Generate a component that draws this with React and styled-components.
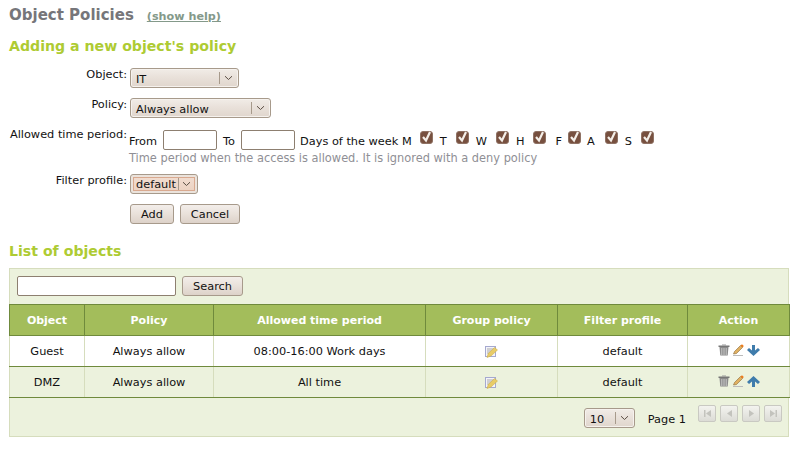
import React from "react";
import styled, { createGlobalStyle } from "styled-components";

const Global = createGlobalStyle`
  html, body { margin: 0; padding: 0; background: #fff; }
  body { font-family: "DejaVu Sans", sans-serif; font-size: 11.33px; color: #111; overflow: hidden; }
`;
const Page = styled.div`
  width: 800px; height: 453px; box-sizing: border-box; padding: 5px 11px 0 9px; overflow: hidden;
`;
const TitleRow = styled.div`display: flex; align-items: baseline; gap: 13px; height: 21px;`;
const Title = styled.h2`margin: 0; font-size: 15px; line-height: 21px; font-weight: bold; color: #76767a;`;
const Help = styled.a`font-size: 11.2px; font-weight: bold; color: #84998a; text-decoration: underline;`;
const Section = styled.h3`
  margin: ${p => p.$top}px 0 0; font-size: 14.13px; line-height: 20px; font-weight: bold; color: #aecb33;
`;
const FormRow = styled.div`
  display: flex; align-items: flex-start; margin-top: ${p => p.$top}px; min-height: ${p => p.$h || 20}px;
`;
const Label = styled.label`
  width: 118px; flex: none; text-align: right; font-size: 11.33px; line-height: 14px; margin: ${p => p.$up ? "-1px" : "0"} 3px 0 0; white-space: nowrap;
`;
const Controls = styled.div`display: flex; flex-direction: column; margin-left: -1px; padding-top: 3px;`;
const Line = styled.div`display: flex; align-items: center; height: 20px;`;
const Word = styled.span`font-size: 11.33px; line-height: 14px; margin: ${p => p.$m || "0"}; position: relative; top: 1px;`;
const Day = styled.span`font-size: 11.33px; line-height: 14px; margin-left: ${p => p.$ml}px; margin-right: ${p => p.$mr}px; position: relative; top: 1px;`;
const Hint = styled.div`font-size: 11.38px; line-height: 14px; color: #8f8f95; margin-top: 1px;`;
const SelectBox = styled.div`
  box-sizing: border-box; width: ${p => p.$w}px; height: 20px; display: flex; align-items: stretch;
  border: 1px solid #a79a8b; border-radius: 3px;
  background: linear-gradient(#f1ece7, #e9e1da 45%, #e0d6cd);
  font-size: 11.33px; box-shadow: inset 0 0 0 1px #f6f2ee;
`;
const SelectText = styled.span`flex: 1; padding-left: 5px; line-height: 20px;`;
const Caret = styled.span`
  width: ${p => p.$w}px; flex: none; display: flex; align-items: center; justify-content: center; position: relative;
  &::before { content: ""; position: absolute; left: 0; top: 3px; bottom: 3px; width: 1px; background: #a79a8b; }
`;
const FocusSelect = styled.div`
  box-sizing: border-box; width: 68px; height: 20px; padding: 2px; border: 1px solid #a79a8b; border-radius: 3px;
  background: #ebe3dc; display: flex;
`;
const FocusInner = styled.div`
  flex: 1; display: flex; border: 1px solid #d9a98f; background: linear-gradient(#f1dccf, #ecd3c3); font-size: 11.33px; line-height: 12px;
`;
const FocusText = styled.span`flex: 1; padding-left: 2px;`;
const FocusCaret = styled.span`
  width: 15px; flex: none; border-left: 1px solid #a79a8b; display: flex; align-items: center; justify-content: center;
`;
const TextInput = styled.div`
  box-sizing: border-box; width: ${p => p.$w}px; height: 20px; background: #fff; border: 1px solid #8d7f70; border-radius: 2px; flex: none;
`;
const Button = styled.div`
  box-sizing: border-box; height: 20px; width: ${p => p.$w}px; display: flex; align-items: center; justify-content: center; font-size: 11.33px;
  border: 1px solid #a79a8b; border-radius: 3px; background: linear-gradient(#f3eeea, #e9e1da 50%, #ddd2c9); flex: none;
`;
const Buttons = styled.div`display: flex; gap: 6px;`;
const Panel = styled.div`
  box-sizing: border-box; margin-top: 7px; height: 169px; border: 1px solid #d6ddbd; background: #ecf2dd;
  display: flex; flex-direction: column;
`;
const SearchBar = styled.div`display: flex; align-items: flex-start; gap: 6px; height: 35px; box-sizing: border-box; padding: 7px 0 0 7px; flex: none;`;
const Table = styled.table`
  width: 780px; border-collapse: collapse; table-layout: fixed; font-size: 11.33px; margin: 0 0 0 -1px; flex: none;
`;
const Th = styled.th`
  height: 30px; padding: 0; background: #a3bd5b; color: #fff; font-weight: bold; font-size: 11px;
  border: 1px solid #6f8a3c; text-align: center;
`;
const Td = styled.td`
  height: 30px; padding: 0; text-align: center; background: ${p => p.$alt ? "#ecf2dd" : "#fff"};
  border-bottom: 1px solid #6f8a3c; border-right: 1px solid #d6ddbd;
  &:first-child { border-left: 1px solid #d6ddbd; }
`;
const IconCell = styled.div`display: flex; align-items: center; justify-content: center; gap: 3px; position: relative; top: ${p => p.$top}px;`;
const Pager = styled.div`
  flex: 1; display: flex; align-items: center; justify-content: flex-end; padding: 2px 6px 0 0;
`;
const PageText = styled.span`font-size: 11.33px; margin: 0 12px 0 13px; position: relative; top: 1px;`;
const PagerButtons = styled.div`display: flex; gap: 4px; position: relative; top: -5px;`;
const PagerButton = styled.div`
  box-sizing: border-box; width: 18px; height: 17px; border: 1px solid #c9c9c2; border-radius: 2px;
  background: linear-gradient(#f3f3ef, #dcdcd6); display: flex; align-items: center; justify-content: center;
`;
const Svg = styled.svg`display: block; flex: none;`;
const CheckSvg = styled(Svg)`align-self: flex-start; margin-top: 1px;`;

const Chevron = () => (
  <Svg width="9" height="6" viewBox="0 0 9 6"><path d="M1 1.2 4.5 4.5 8 1.2" fill="none" stroke="#5a4e44" strokeWidth="1" /></Svg>
);
const Check = () => (
  <CheckSvg width="13" height="13" viewBox="0 0 13 13">
    <rect x=".5" y=".5" width="12" height="12" rx="2.5" fill="#77503f" stroke="#8f7264" />
    <path d="M3 6 6 9.5 10 1" fill="none" stroke="#f4efe9" strokeWidth="2.2" />
  </CheckSvg>
);
const Trash = () => (
  <Svg width="12" height="12" viewBox="0 0 12 12">
    <path d="M.5 1.5h11v1.5H.5z" fill="#777" /><path d="M4 .5h4v1H4z" fill="#999" />
    <path d="M1.5 3h9l-.8 8.5H2.3z" fill="#8a8a8a" />
    <path d="M3.8 4v7M6 4v7M8.2 4v7" stroke="#c8c8c8" strokeWidth="1" />
  </Svg>
);
const Pencil = () => (
  <Svg width="11" height="12" viewBox="0 0 11 12">
    <path d="M0 11.5h10" stroke="#bbb" strokeWidth="1" />
    <path d="M.5 10 1.5 7.5 7.5 1.5 9.5 3.5 3.5 9.5z" fill="#e0b060" stroke="#8a6a3a" strokeWidth=".6" />
    <path d="M7.5 1.5 9 .3 10.8 2 9.5 3.5z" fill="#ee7a1a" />
  </Svg>
);
const Arrow = ({ up }) => (
  <Svg width="13" height="11" viewBox="0 0 13 11">
    <g transform={up ? "" : "translate(0 11) scale(1 -1)"}>
      <path d="M6.5 0 13 6 11 8 8 5.5V11H5V5.5L2 8 0 6z" fill="#3f7cac" />
    </g>
  </Svg>
);
const Note = () => (
  <Svg width="13" height="12" viewBox="0 0 13 12">
    <rect x=".5" y=".5" width="10" height="10" fill="#f4f4fa" stroke="#a5a9cf" />
    <path d="M2 3h7M2 5h5M2 7h3" stroke="#a9a9a9" strokeWidth="1" />
    <path d="M2 11.5 3.2 7.5 9.5 1.5 12.5 4 6 10z" fill="#e8cc68" stroke="#c9a93f" strokeWidth=".5" />
  </Svg>
);
const Nav = ({ d, bar }) => (
  <Svg width="9" height="9" viewBox="0 0 9 9">
    {bar !== undefined && <rect x={bar} y="1" width="1.5" height="7" fill="#c3c3bd" />}
    <path d={d} fill="#c3c3bd" />
  </Svg>
);

const days = [["T", 7, 9], ["W", 7, 9], ["H", 7, 9], ["F", 9, 6], ["A", 6, 10], ["S", 7, 9]];
const rows = [
  ["Guest", "Always allow", "08:00-16:00 Work days", "default", false],
  ["DMZ", "Always allow", "All time", "default", true],
];

export default function App() {
  return (
    <Page>
      <Global />
      <TitleRow>
        <Title>Object Policies</Title>
        <Help>(show help)</Help>
      </TitleRow>
      <Section $top={10}>Adding a new object's policy</Section>
      <FormRow $top={12}>
        <Label $up>Object:</Label>
        <SelectBox $w={109}><SelectText>IT</SelectText><Caret $w={19}><Chevron /></Caret></SelectBox>
      </FormRow>
      <FormRow $top={10}>
        <Label $up>Policy:</Label>
        <SelectBox $w={141}><SelectText>Always allow</SelectText><Caret $w={19}><Chevron /></Caret></SelectBox>
      </FormRow>
      <FormRow $top={9} $h={38}>
        <Label>Allowed time period:</Label>
        <Controls>
          <Line>
            <Word $m="0 6px 0 0">From</Word>
            <TextInput $w={54} />
            <Word $m="0 6px">To</Word>
            <TextInput $w={54} />
            <Word $m="0 8px 0 5px">Days of the week M</Word>
            <Check />
            {days.map(([d, l, r]) => (
              <React.Fragment key={d}>
                <Day $ml={l} $mr={r}>{d}</Day>
                <Check />
              </React.Fragment>
            ))}
          </Line>
          <Hint>Time period when the access is allowed. It is ignored with a deny policy</Hint>
        </Controls>
      </FormRow>
      <FormRow $top={9}>
        <Label $up>Filter profile:</Label>
        <FocusSelect>
          <FocusInner><FocusText>default</FocusText><FocusCaret><Chevron /></FocusCaret></FocusInner>
        </FocusSelect>
      </FormRow>
      <FormRow $top={10}>
        <Label />
        <Buttons>
          <Button $w={44}>Add</Button>
          <Button $w={60}>Cancel</Button>
        </Buttons>
      </FormRow>
      <Section $top={17}>List of objects</Section>
      <Panel>
        <SearchBar>
          <TextInput $w={159} />
          <Button $w={61}>Search</Button>
        </SearchBar>
        <Table>
          <colgroup>
            <col width="75" /><col width="129" /><col width="212" /><col width="132" /><col width="130" /><col width="102" />
          </colgroup>
          <thead>
            <tr>
              <Th>Object</Th><Th>Policy</Th><Th>Allowed time period</Th><Th>Group policy</Th><Th>Filter profile</Th><Th>Action</Th>
            </tr>
          </thead>
          <tbody>
            {rows.map(([o, p, t, f, alt]) => (
              <tr key={o}>
                <Td $alt={alt}>{o}</Td>
                <Td $alt={alt}>{p}</Td>
                <Td $alt={alt}>{t}</Td>
                <Td $alt={alt}><IconCell $top={1}><Note /></IconCell></Td>
                <Td $alt={alt}>{f}</Td>
                <Td $alt={alt}><IconCell $top={-1}><Trash /><Pencil /><Arrow up={alt} /></IconCell></Td>
              </tr>
            ))}
          </tbody>
        </Table>
        <Pager>
          <SelectBox $w={51}><SelectText>10</SelectText><Caret $w={19}><Chevron /></Caret></SelectBox>
          <PageText>Page 1</PageText>
          <PagerButtons>
            <PagerButton><Nav d="M8 1 3 4.5 8 8z" bar={1} /></PagerButton>
            <PagerButton><Nav d="M7 1 2 4.5 7 8z" /></PagerButton>
            <PagerButton><Nav d="M2 1 7 4.5 2 8z" /></PagerButton>
            <PagerButton><Nav d="M1 1 6 4.5 1 8z" bar={6.5} /></PagerButton>
          </PagerButtons>
        </Pager>
      </Panel>
    </Page>
  );
}
